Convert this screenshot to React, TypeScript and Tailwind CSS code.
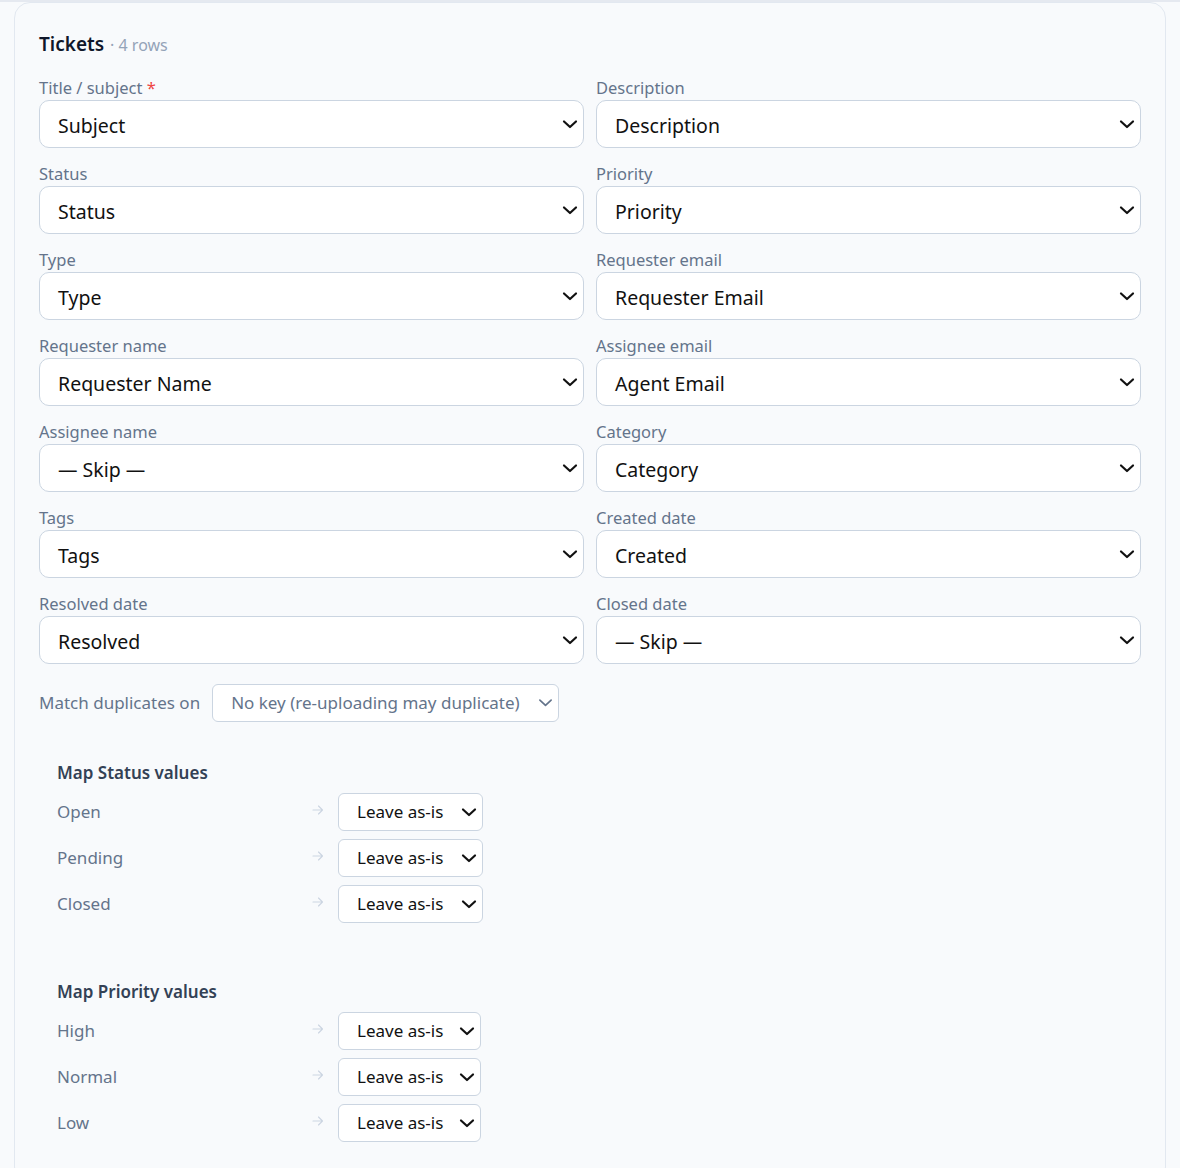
import React from 'react';

const font = { fontFamily: '"Noto Sans", "Open Sans", sans-serif' };

type Field = { label: string; value: string; required?: boolean };

const fields: Field[] = [
  { label: 'Title / subject', value: 'Subject', required: true },
  { label: 'Description', value: 'Description' },
  { label: 'Status', value: 'Status' },
  { label: 'Priority', value: 'Priority' },
  { label: 'Type', value: 'Type' },
  { label: 'Requester email', value: 'Requester Email' },
  { label: 'Requester name', value: 'Requester Name' },
  { label: 'Assignee email', value: 'Agent Email' },
  { label: 'Assignee name', value: '— Skip —' },
  { label: 'Category', value: 'Category' },
  { label: 'Tags', value: 'Tags' },
  { label: 'Created date', value: 'Created' },
  { label: 'Resolved date', value: 'Resolved' },
  { label: 'Closed date', value: '— Skip —' },
];

const Chevron: React.FC<{ size?: number; color?: string; weight?: number }> = ({ size = 16, color = '#111', weight = 2.2 }) => (
  <svg width={size} height={size} viewBox="0 0 16 16" fill="none" className="shrink-0">
    <path d="M2 5.5 L8 11 L14 5.5" stroke={color} strokeWidth={weight} strokeLinecap="round" strokeLinejoin="round" />
  </svg>
);

const Arrow = () => (
  <svg width="12" height="12" viewBox="0 0 12 12" fill="none" className="-mt-1">
    <path d="M1 6 H10.5 M6.5 2 L10.5 6 L6.5 10" stroke="#cbd5e1" strokeWidth="1.1" strokeLinecap="round" strokeLinejoin="round" />
  </svg>
);

const MapSection: React.FC<{ title: string; rows: string[]; selectWidth: string }> = ({ title, rows, selectWidth }) => (
  <section className="px-[18px] py-4">
    <h4 className="text-[17px] font-semibold text-[#334155] leading-6 mb-2">{title}</h4>
    <div className="flex flex-col gap-2">
      {rows.map((r) => (
        <div key={r} className="flex items-center">
          <span className="w-[255px] text-[17px] text-[#64748b]">{r}</span>
          <span className="w-[26px] flex">
            <Arrow />
          </span>
          <div className={`${selectWidth} h-[38px] flex items-center justify-between pl-[18px] pr-[5px] bg-white border border-[#cbd5e1] rounded-md`}>
            <span className="text-[17px] text-[#111]">Leave as-is</span>
            <Chevron size={16} />
          </div>
        </div>
      ))}
    </div>
  </section>
);

export default function App() {
  return (
    <div className="min-h-screen bg-[#f8fafc]" style={font}>
      <div className="h-[2px] bg-[#e5e9f0]" />
      <div className="px-[14px]">
        <div className="border border-[#e2e8f0] rounded-2xl px-6 pt-[27px] pb-6 bg-[#f8fafc]">
          <h3 className="flex items-baseline gap-1.5 mb-[17px]">
            <span className="text-[19px] font-semibold text-[#0f172a]">Tickets</span>
            <span className="text-[16px] text-[#94a3b8]">· 4 rows</span>
          </h3>
          <div className="grid grid-cols-2 gap-x-3 gap-y-3.5">
            {fields.map((f) => (
              <div key={f.label}>
                <label className="block pt-px text-[16.5px] leading-[22px] text-[#64748b] mb-px">
                  {f.label}
                  {f.required && <span className="text-[#ef4444]"> *</span>}
                </label>
                <div className="h-12 flex items-center justify-between pl-[18px] pr-[5px] bg-white border border-[#cbd5e1] rounded-[10px]">
                  <span className="pt-[4px] text-[19.5px] text-[#111]">{f.value}</span>
                  <Chevron size={16} />
                </div>
              </div>
            ))}
          </div>
          <div className="flex items-center mt-5 gap-3">
            <span className="text-[17px] text-[#64748b]">Match duplicates on</span>
            <div className="w-[347px] h-[38px] flex items-center justify-between pl-[18px] pr-[5px] bg-white border border-[#cbd5e1] rounded-md">
              <span className="text-[17px] text-[#64748b]">No key (re-uploading may duplicate)</span>
              <Chevron size={15} color="#64748b" weight={1.8} />
            </div>
          </div>
          <div className="mt-[23px]">
            <MapSection title="Map Status values" rows={['Open', 'Pending', 'Closed']} selectWidth="w-[145px]" />
            <div className="mt-[25px]">
              <MapSection title="Map Priority values" rows={['High', 'Normal', 'Low']} selectWidth="w-[143px]" />
            </div>
          </div>
        </div>
      </div>
    </div>
  );
}
